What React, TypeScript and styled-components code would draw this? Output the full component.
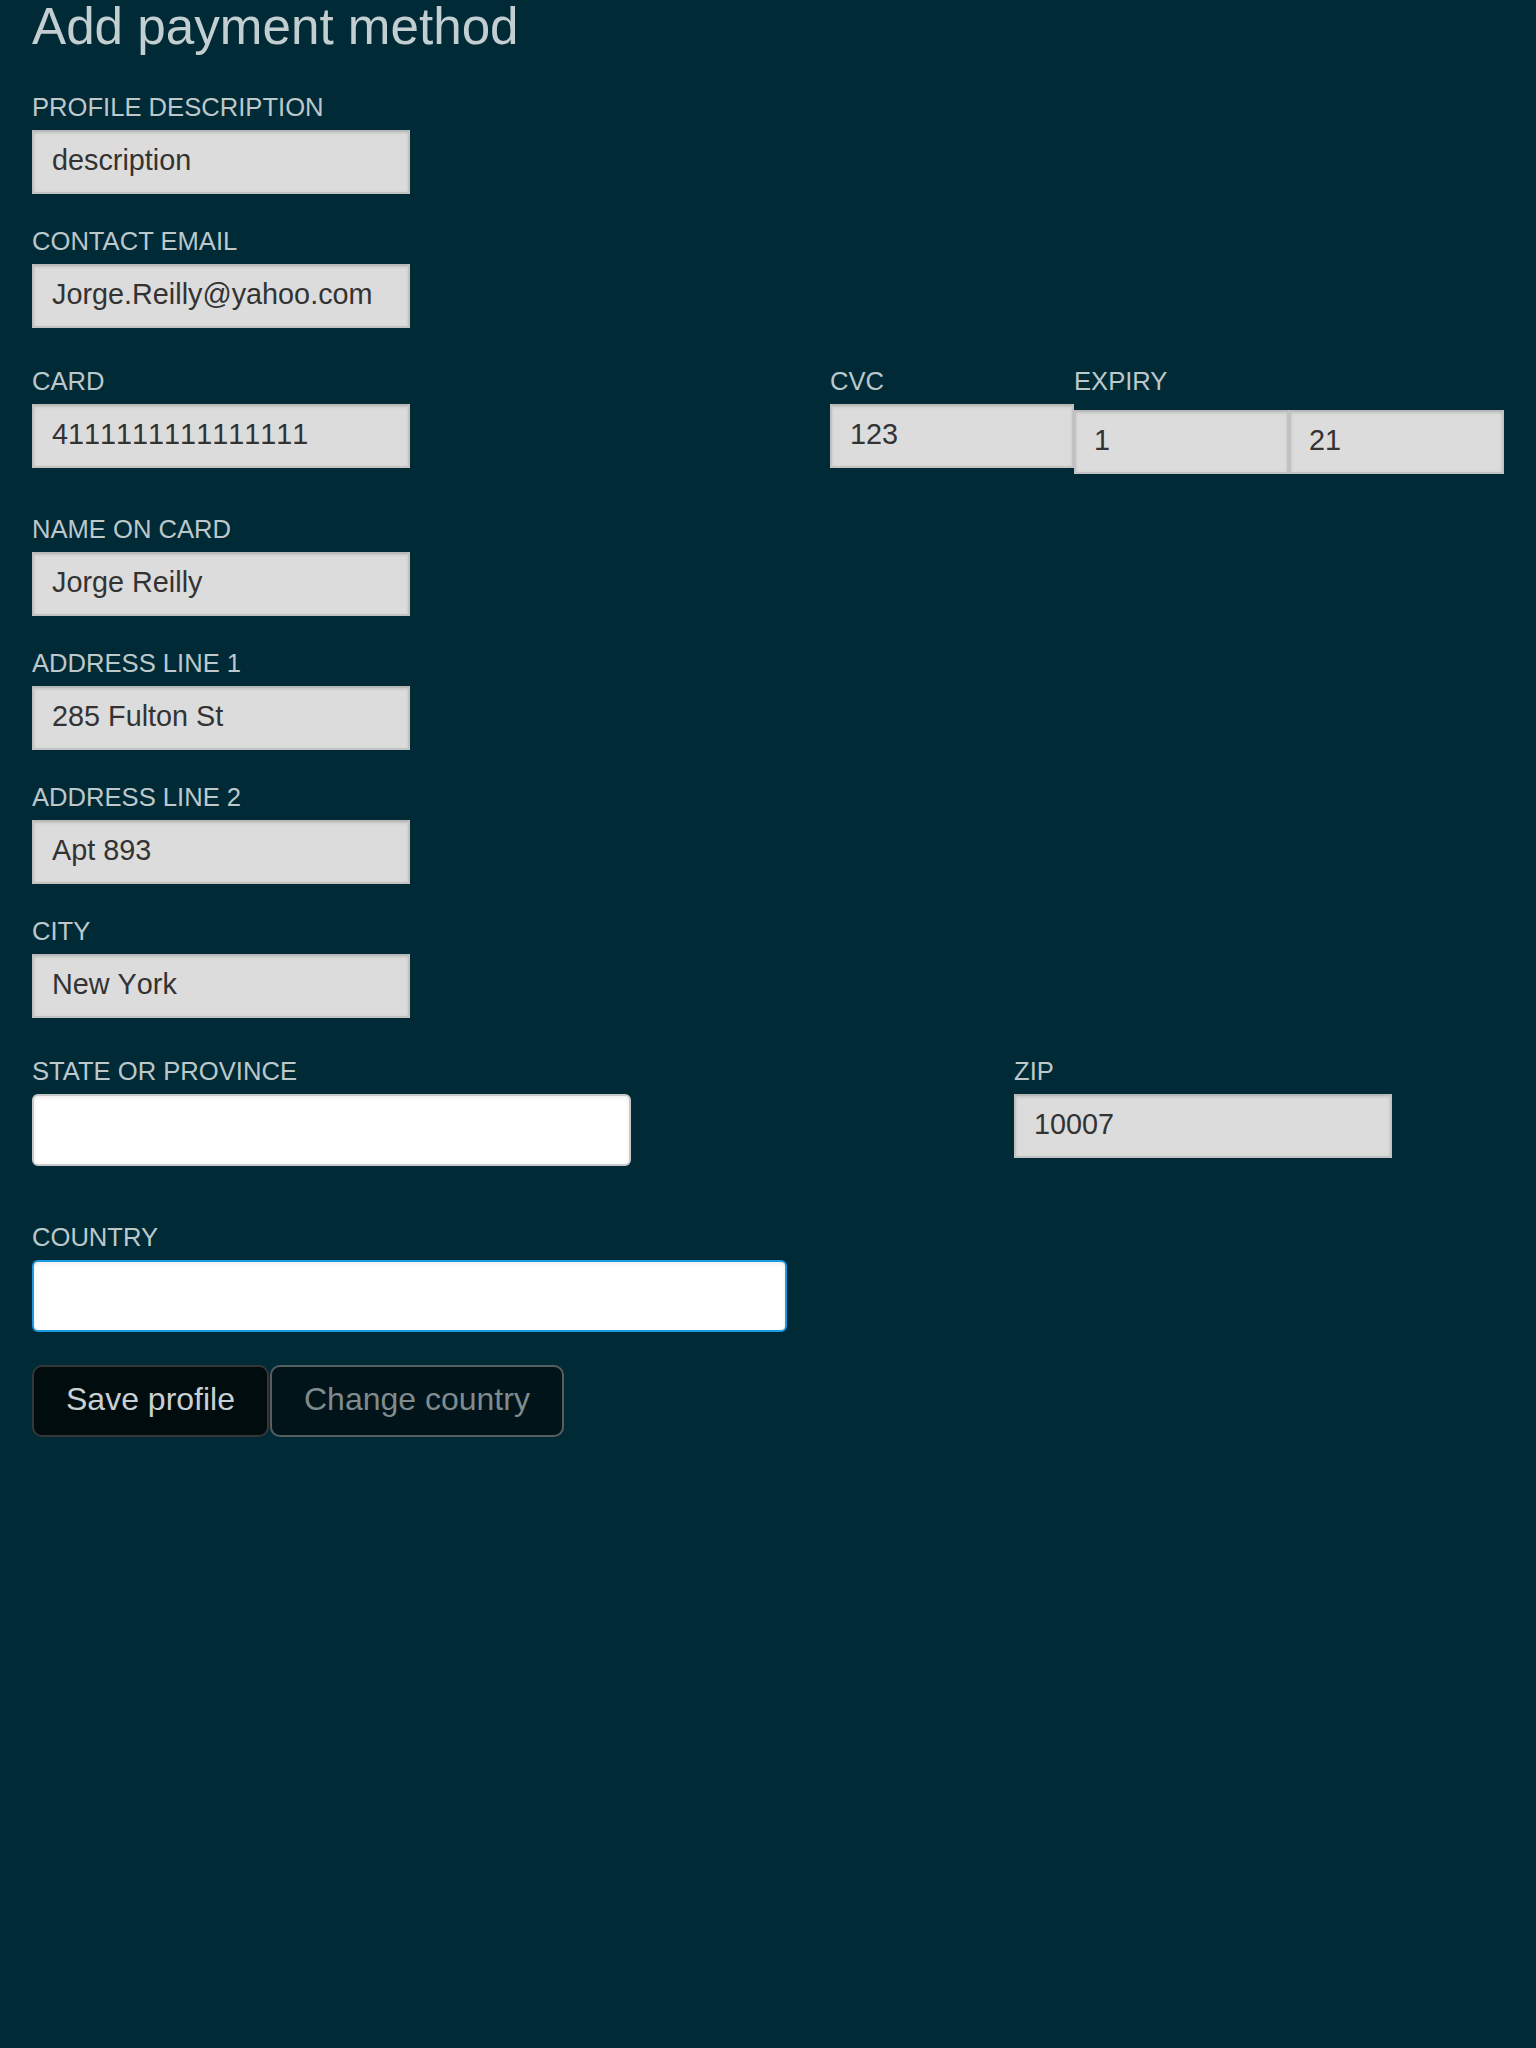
import React from "react";
import styled, { createGlobalStyle, css } from "styled-components";

const GlobalStyle = createGlobalStyle`
  html, body {
    margin: 0;
    padding: 0;
    background: #012a37;
    min-height: 100%;
  }
  body {
    font-family: "Liberation Sans", Arial, sans-serif;
    min-height: 2048px;
  }
  * { box-sizing: border-box; }
`;

const Page = styled.div`
  padding: 0 32px;
  min-height: 2048px;
  background: #012a37;
`;

const Title = styled.h1`
  margin: 0 0 39px;
  font-size: 51.2px;
  line-height: 54px;
  font-weight: 400;
  color: #c3ced0;
`;

const Form = styled.form`
  display: flex;
  flex-direction: column;
  gap: 33px;
`;

const Field = styled.div<{ $top?: number; $gap?: number }>`
  display: flex;
  flex-direction: column;
  align-items: flex-start;
  gap: ${(p) => p.$gap ?? 8}px;
  margin-top: ${(p) => p.$top ?? 0}px;
  min-width: 0;
`;

const Label = styled.label`
  font-size: 25.6px;
  line-height: 29px;
  color: #bcc8ca;
  text-transform: uppercase;
  white-space: nowrap;
`;

const grayInput = css`
  background: #dcdcdc;
  border: 2px solid #c2c2c2;
  border-top-color: #b9b9b9;
  box-shadow: inset 0 1px 3px rgba(0, 0, 0, 0.12);
  border-radius: 0;
  height: 64px;
`;

const whiteInput = css`
  background: #ffffff;
  border: 2px solid #c9c9c9;
  border-radius: 6px;
  box-shadow: inset 0 2px 4px rgba(0, 0, 0, 0.08);
  height: 72px;
`;

const focusInput = css`
  background: #ffffff;
  border: 2px solid #1a9be2;
  border-radius: 6px;
  box-shadow: inset 0 2px 4px rgba(0, 0, 0, 0.08);
  height: 72px;
`;

const Input = styled.input<{ $w: number | string; $variant?: "gray" | "white" | "focus"; $offset?: number }>`
  font-family: "Liberation Sans", Arial, sans-serif;
  font-size: 28.8px;
  font-kerning: none;
  color: #333333;
  padding: 0 18px 4px;
  margin: ${(p) => p.$offset ?? 0}px 0 0;
  outline: none;
  width: ${(p) => (typeof p.$w === "number" ? `${p.$w}px` : p.$w)};
  ${(p) =>
    p.$variant === "white" ? whiteInput : p.$variant === "focus" ? focusInput : grayInput}
`;

const Row = styled.div<{ $cols: string; $top: number }>`
  display: grid;
  grid-template-columns: ${(p) => p.$cols};
  align-items: start;
  margin-top: ${(p) => p.$top}px;
`;

const ExpiryInputs = styled.div`
  display: grid;
  grid-template-columns: 1fr 1fr;
  width: 100%;
  margin-top: 6px;
`;

const Buttons = styled.div`
  display: flex;
  gap: 1px;
`;

const Button = styled.button<{ $secondary?: boolean }>`
  font-family: "Liberation Sans", Arial, sans-serif;
  font-size: 32px;
  height: 72px;
  padding: 0 32px 3px;
  border-radius: 10px;
  border: 2px solid ${(p) => (p.$secondary ? "#575e60" : "#343637")};
  background: ${(p) => (p.$secondary ? "#01141a" : "#010c0e")};
  color: ${(p) => (p.$secondary ? "#7f8b8d" : "#c9d0d1")};
  cursor: pointer;
`;

export default function App() {
  return (
    <>
      <GlobalStyle />
      <Page>
        <Title>Add payment method</Title>
        <Form onSubmit={(e) => e.preventDefault()}>
          <Field>
            <Label>Profile description</Label>
            <Input $w={378} defaultValue="description" />
          </Field>
          <Field>
            <Label>Contact email</Label>
            <Input $w={378} defaultValue="Jorge.Reilly@yahoo.com" />
          </Field>
          <Row $cols="798px 244px 1fr" $top={6}>
            <Field>
              <Label>Card</Label>
              <Input $w={378} defaultValue="4111111111111111" />
            </Field>
            <Field>
              <Label>CVC</Label>
              <Input $w="100%" defaultValue="123" />
            </Field>
            <Field $gap={0}>
              <Label>Expiry</Label>
              <ExpiryInputs>
                <Input $w="100%" $offset={8} defaultValue="1" />
                <Input $w="100%" $offset={8} defaultValue="21" />
              </ExpiryInputs>
            </Field>
          </Row>
          <Field $top={8}>
            <Label>Name on card</Label>
            <Input $w={378} defaultValue="Jorge Reilly" />
          </Field>
          <Field>
            <Label>Address line 1</Label>
            <Input $w={378} defaultValue="285 Fulton St" />
          </Field>
          <Field>
            <Label>Address line 2</Label>
            <Input $w={378} defaultValue="Apt 893" />
          </Field>
          <Field>
            <Label>City</Label>
            <Input $w={378} defaultValue="New York" />
          </Field>
          <Row $cols="982px 1fr" $top={6}>
            <Field>
              <Label>State or province</Label>
              <Input $w={599} $variant="white" />
            </Field>
            <Field>
              <Label>Zip</Label>
              <Input $w={378} defaultValue="10007" />
            </Field>
          </Row>
          <Field $top={24}>
            <Label>Country</Label>
            <Input $w={755} $variant="focus" />
          </Field>
          <Buttons>
            <Button type="submit">Save profile</Button>
            <Button type="button" $secondary>
              Change country
            </Button>
          </Buttons>
        </Form>
      </Page>
    </>
  );
}
